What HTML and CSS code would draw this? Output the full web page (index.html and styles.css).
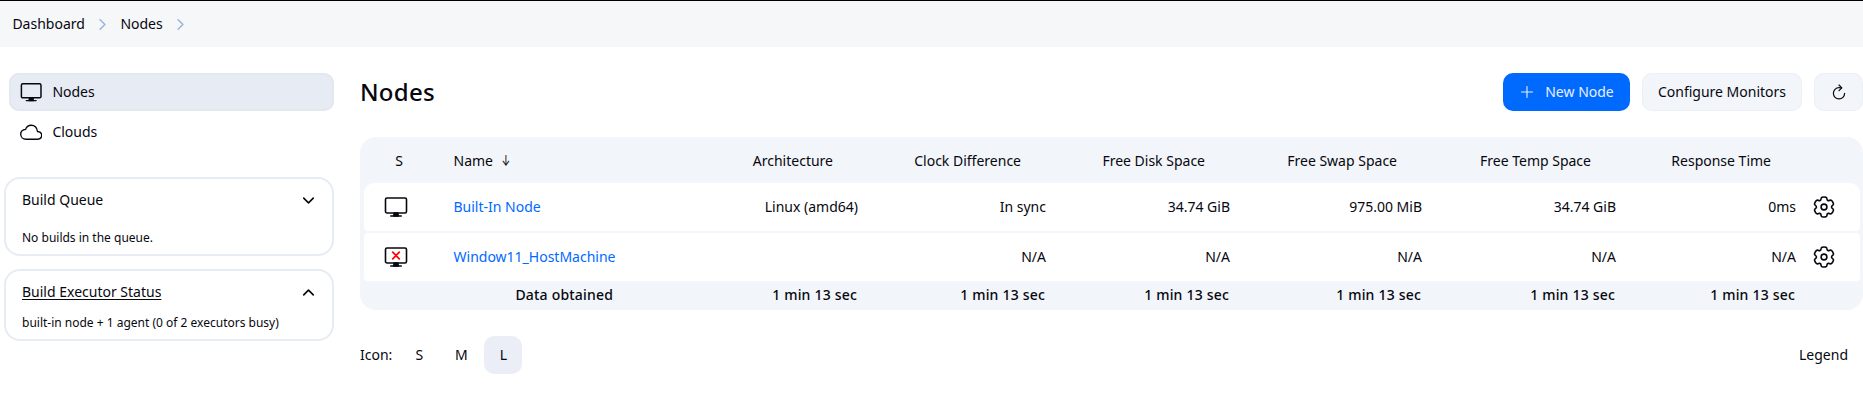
FILE: index.html
```html
<!DOCTYPE html>
<html lang="en">
<head>
<meta charset="utf-8">
<title>Nodes</title>
<link rel="stylesheet" href="styles.css">
</head>
<body>
<svg class="sprite" width="0" height="0">
  <symbol id="computer" viewBox="0 0 512 512"><rect x="32" y="64" width="448" height="320" rx="32" fill="none" stroke="currentColor" stroke-width="34"/><path d="M304 448l-8-64h-80l-8 64h96z" fill="currentColor" stroke="currentColor" stroke-width="32" stroke-linejoin="round"/><path d="M368 448H144" fill="none" stroke="currentColor" stroke-width="32" stroke-linecap="round"/></symbol>
  <symbol id="chevron" viewBox="0 0 512 512"><path d="M184 112l144 144-144 144" fill="none" stroke="currentColor" stroke-width="48" stroke-linecap="round" stroke-linejoin="round"/></symbol>
  <symbol id="gear" viewBox="0 0 24 24"><g fill="none" stroke="currentColor" stroke-width="1.6" stroke-linejoin="round"><circle cx="12" cy="12" r="2.9"/><path d="M13.77 2.15C13.4 2 12.93 2 12 2s-1.4 0-1.77.15a2 2 0 0 0-1.08 1.09c-.1.22-.13.48-.15.86a1.62 1.62 0 0 1-.8 1.35 1.64 1.64 0 0 1-1.57.01c-.34-.18-.58-.28-.82-.31a2 2 0 0 0-1.48.4c-.31.24-.55.65-1.01 1.45s-.7 1.2-.75 1.6a2 2 0 0 0 .4 1.48c.15.2.36.36.68.56.47.3.78.8.78 1.36s-.3 1.07-.78 1.36c-.32.2-.53.37-.68.57a2 2 0 0 0-.4 1.47c.05.4.28.8.75 1.6s.7 1.2 1.01 1.45a2 2 0 0 0 1.48.4c.24-.03.48-.13.82-.31a1.64 1.64 0 0 1 1.57.01c.49.28.78.8.8 1.35.02.38.05.64.15.86.2.5.6.88 1.08 1.09.37.15.84.15 1.77.15s1.4 0 1.77-.15a2 2 0 0 0 1.08-1.09c.1-.22.13-.48.15-.86.02-.56.31-1.07.8-1.35a1.64 1.64 0 0 1 1.57-.01c.34.18.58.28.82.31a2 2 0 0 0 1.48-.4c.31-.24.55-.65 1.01-1.45s.7-1.2.75-1.6a2 2 0 0 0-.4-1.47c-.15-.2-.36-.37-.68-.57A1.63 1.63 0 0 1 19.56 12c0-.56.3-1.07.78-1.36.32-.2.53-.36.68-.56a2 2 0 0 0 .4-1.48c-.05-.4-.28-.8-.75-1.6s-.7-1.2-1.01-1.45a2 2 0 0 0-1.48-.4c-.24.03-.48.13-.82.31a1.64 1.64 0 0 1-1.57-.01 1.62 1.62 0 0 1-.8-1.35c-.02-.38-.05-.64-.15-.86a2 2 0 0 0-1.08-1.09Z"/></g></symbol>
</svg>

<nav class="breadcrumbs">
  <a>Dashboard</a><svg class="crumb-sep"><use href="#chevron"/></svg>
  <a>Nodes</a><svg class="crumb-sep"><use href="#chevron"/></svg>
</nav>

<div class="page">
  <aside class="sidebar">
    <div class="tasks">
      <a class="task active"><svg class="task-icon"><use href="#computer"/></svg>Nodes</a>
      <a class="task"><svg class="task-icon" viewBox="0 0 512 512"><path d="M400 240c-8.89-89.54-71-144-144-144-69 0-113.44 48.2-128 96-60 6-112 43.59-112 112 0 66 54 112 120 112h260c55 0 100-27.44 100-88 0-59.82-53-85.76-96-88z" fill="none" stroke="currentColor" stroke-width="32" stroke-linejoin="round"/></svg>Clouds</a>
    </div>
    <section class="pane queue">
      <header><span>Build Queue</span><svg class="toggle down"><use href="#chevron"/></svg></header>
      <p>No builds in the queue.</p>
    </section>
    <section class="pane executors">
      <header><a class="underlined">Build Executor Status</a><svg class="toggle up"><use href="#chevron"/></svg></header>
      <p>built-in node + 1 agent (0 of 2 executors busy)</p>
    </section>
  </aside>

  <main class="main">
    <div class="app-bar">
      <h1>Nodes</h1>
      <div class="controls">
        <a class="button primary"><svg class="plus" viewBox="0 0 12 12"><path d="M6 .5v11M.5 6h11" stroke="currentColor" stroke-width="1.1" stroke-linecap="round"/></svg>New Node</a>
        <a class="button">Configure Monitors</a>
        <a class="button refresh"><svg class="refresh-icon" viewBox="0 0 512 512"><path d="M320 146s24.36-12-64-12a160 160 0 10160 160" fill="none" stroke="currentColor" stroke-width="34" stroke-linecap="round" stroke-miterlimit="10"/><path d="M256 58l80 80-80 80" fill="none" stroke="currentColor" stroke-width="34" stroke-linecap="round" stroke-linejoin="round"/></svg></a>
      </div>
    </div>

    <div class="table">
      <div class="row head">
        <span class="status">S</span><span class="name">Name <span class="arrow">↓</span></span><span>Architecture</span><span>Clock Difference</span><span>Free Disk Space</span><span>Free Swap Space</span><span>Free Temp Space</span><span>Response Time</span>
      </div>
      <div class="row body first">
        <span class="status"><svg class="node-icon"><use href="#computer"/></svg></span><a class="name">Built-In Node</a><span>Linux (amd64)</span><span>In sync</span><span>34.74 GiB</span><span>975.00 MiB</span><span>34.74 GiB</span><span>0ms</span><span class="config"><svg class="gear"><use href="#gear"/></svg></span>
      </div>
      <div class="row body last">
        <span class="status"><svg class="node-icon" viewBox="0 0 512 512"><use href="#computer"/><path d="M186 154l140 140M326 154L186 294" stroke="#f00" stroke-width="36" stroke-linecap="round"/></svg></span><a class="name">Window11_HostMachine</a><span></span><span>N/A</span><span>N/A</span><span>N/A</span><span>N/A</span><span>N/A</span><span class="config"><svg class="gear"><use href="#gear"/></svg></span>
      </div>
      <div class="row foot">
        <span></span><span class="obtained">Data obtained</span><span>1 min 13 sec</span><span>1 min 13 sec</span><span>1 min 13 sec</span><span>1 min 13 sec</span><span>1 min 13 sec</span><span>1 min 13 sec</span>
      </div>
    </div>

    <div class="icon-bar">
      <div class="sizes"><span class="label">Icon:</span><a class="size">S</a><a class="size">M</a><a class="size selected">L</a></div>
      <a class="legend">Legend</a>
    </div>
  </main>
</div>
</body>
</html>
```
FILE: styles.css
```css
* { box-sizing: border-box; }
body {
  margin: 0;
  height: 401px;
  overflow: hidden;
  background: #fff;
  color: #07070f;
  font: 14px/20px "Noto Sans", sans-serif;
}
svg { display: block; flex: none; }
.sprite { display: none; }
.breadcrumbs {
  display: flex;
  align-items: center;
  height: 47px;
  padding-left: 12.4px;
  border-top: 1px solid #000;
  background: #f6f7f9;
}
.crumb-sep { width: 17px; height: 17px; margin: 0 9.5px 0 9px; color: #9fb6d6; }
.page { display: flex; }
.sidebar { width: 334px; padding: 26px 0 0 4px; flex: none; }
.tasks { padding-left: 5px; margin-bottom: 26px; }
.task {
  display: flex;
  align-items: center;
  gap: 10px;
  height: 38px;
  padding-left: 11px;
  border-radius: 10px;
  margin-bottom: 2px;
}
.task.active { background: #e7ebf4; box-shadow: inset 0 0 0 2px #e3e8f0; }
.task-icon { width: 22.4px; height: 22.4px; }
.pane {
  border: 2px solid #e7ebf3;
  border-radius: 16px;
  padding: 0 15px 0 16px;
}
.pane header { display: flex; justify-content: space-between; align-items: center; }
.pane p { margin: 0; font-size: 12px; line-height: 18px; }
.queue { height: 79px; padding-top: 11px; margin-bottom: 13px; }
.queue p { margin-top: 19px; }
.executors { height: 72px; padding-top: 11px; }
.executors p { margin-top: 12px; }
.underlined { text-decoration: underline; text-underline-offset: 2px; }
.toggle { width: 17px; height: 17px; }
.down { transform: rotate(90deg); }
.up { transform: rotate(-90deg); }
.main { width: 1503px; flex: none; margin-left: 26px; padding-top: 26px; }
.app-bar { display: flex; justify-content: space-between; align-items: center; height: 38px; margin-bottom: 26px; }
h1 { margin: 0; font-size: 24px; line-height: 32px; font-weight: 500; letter-spacing: .25px; }
.controls { display: flex; gap: 12px; }
.button {
  display: flex;
  align-items: center;
  justify-content: center;
  height: 38px;
  width: 160px;
  border-radius: 10px;
  background: #f2f5f9;
  box-shadow: inset 0 0 0 1px #eceff4;
}
.primary { width: 127px; gap: 12px; color: #e6f0ff; background: #006aff; box-shadow: none; padding-left: 2px; }
.plus { width: 12px; height: 12px; }
.refresh { width: 49px; }
.refresh-icon { width: 18px; height: 18px; }
.table { height: 173px; padding: 0 3px 0 4px; border-radius: 16px; background: #f2f5f9; }
.row {
  display: grid;
  grid-template-columns: 89.5px 221.5px 183px 188px 184px 192px 194px 180px 1fr;
  align-items: center;
  text-align: right;
}
.row .name { text-align: left; }
.head { height: 46px; padding-top: 2px; }
.head > span { padding-right: 25px; }
.head .status { text-align: center; padding: 0 19.5px 0 0; }
.arrow { display: inline-block; margin-left: 3px; font-family: Inter, sans-serif; line-height: 1; transform: scaleX(.75); }
.body { height: 48px; border-radius: 4px; background: #fff; margin-bottom: 2px; }
.first { border-radius: 10px 10px 4px 4px; }
.last { margin-bottom: 0; }
.body .name { color: #006aff; }
.body .status { padding-left: 20px; }
.node-icon { width: 24px; height: 24px; }
.config { padding-left: 16px; }
.gear { width: 24px; height: 24px; }
.foot { height: 27px; font-weight: 500; letter-spacing: .2px; }
.foot > span { padding-right: 1px; }
.foot .obtained { text-align: center; padding: 0; }
.icon-bar { display: flex; justify-content: space-between; align-items: center; margin-top: 26px; padding-right: 15px; height: 38px; }
.sizes { display: flex; align-items: center; gap: 4px; }
.label { margin-right: 4px; }
.size { display: grid; place-items: center; width: 38px; height: 38px; border-radius: 10px; }
.selected { background: #ebeef7; }
```
